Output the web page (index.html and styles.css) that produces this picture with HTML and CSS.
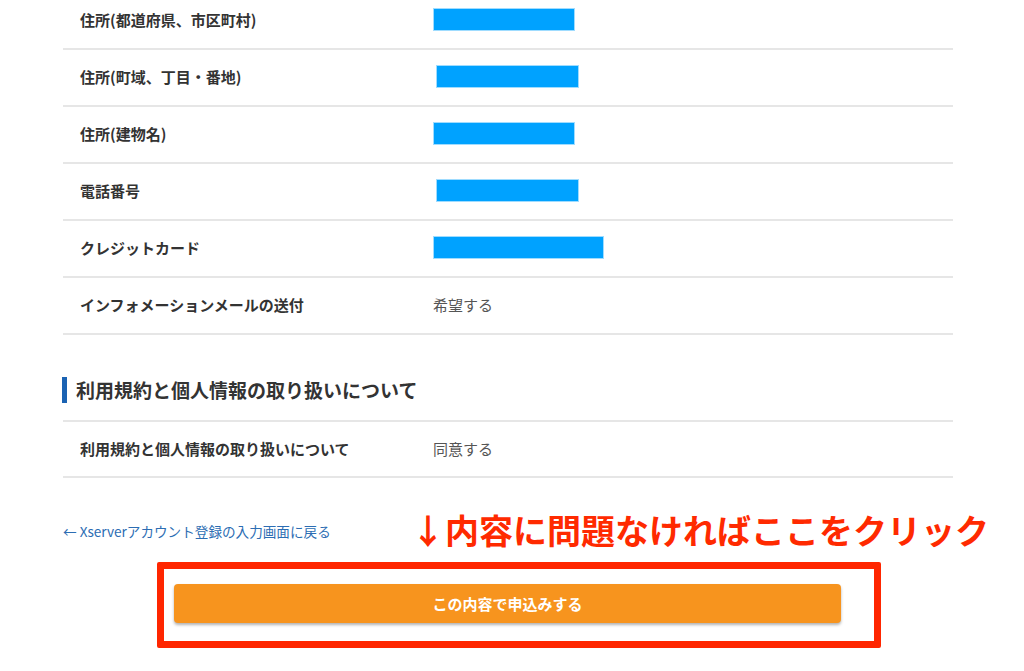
FILE: index.html
```html
<!DOCTYPE html>
<html lang="ja">
<head>
<meta charset="utf-8">
<title>確認画面</title>
<link rel="stylesheet" href="styles.css">
</head>
<body>
<main class="page">
  <div class="table table-first">
    <div class="row"><div class="label">住所(都道府県、市区町村)</div><div class="value"><span class="mask"></span></div></div>
    <div class="row"><div class="label">住所(町域、丁目・番地)</div><div class="value"><span class="mask mask-shift"></span></div></div>
    <div class="row"><div class="label">住所(建物名)</div><div class="value"><span class="mask"></span></div></div>
    <div class="row"><div class="label">電話番号</div><div class="value"><span class="mask mask-shift"></span></div></div>
    <div class="row"><div class="label">クレジットカード</div><div class="value"><span class="mask mask-wide"></span></div></div>
    <div class="row"><div class="label">インフォメーションメールの送付</div><div class="value">希望する</div></div>
  </div>

  <h2 class="section-title">利用規約と個人情報の取り扱いについて</h2>
  <div class="table table-bordered">
    <div class="row row-short"><div class="label">利用規約と個人情報の取り扱いについて</div><div class="value">同意する</div></div>
  </div>

  <div class="actions">
    <a class="back" href="#">← Xserverアカウント登録の入力画面に戻る</a>
    <p class="note">↓内容に問題なければここをクリック</p>
  </div>

  <div class="highlight">
    <button class="submit" type="button">この内容で申込みする</button>
  </div>
</main>
</body>
</html>
```

FILE: styles.css
```css
html, body {
  margin: 0;
  padding: 0;
  background: #ffffff;
}
body {
  font-family: "Noto Sans CJK JP", "Noto Sans", sans-serif;
  color: #333333;
  overflow: hidden;
}
.page {
  width: 890px;
  margin-left: 63px;
}
.table-first {
  margin-top: -7px;
}
.table-bordered {
  border-top: 2px solid #e6e6e6;
}
.row {
  display: grid;
  grid-template-columns: 370px 1fr;
  align-items: center;
  height: 55px;
  border-bottom: 2px solid #e6e6e6;
}
.row-short {
  height: 54px;
}
.label {
  padding-left: 17px;
  font-size: 15px;
  font-weight: 700;
  color: #333333;
  line-height: 1;
  margin-top: -2px;
}
.value {
  font-size: 15px;
  color: #555555;
  line-height: 1;
  margin-top: -2px;
}
.mask {
  display: block;
  width: 142px;
  height: 23px;
  background: #00a2ff;
  box-shadow: 0 0 0 1px #9fdcff inset;
}
.mask-shift {
  margin-left: 3px;
  width: 143px;
}
.mask-wide {
  width: 171px;
}
.section-title {
  margin: 42px 0 17px -1px;
  height: 26px;
  display: flex;
  align-items: center;
  border-left: 5px solid #1b63b3;
  padding-left: 9px;
  font-size: 19px;
  font-weight: 700;
  line-height: 26px;
  color: #333333;
}
.actions {
  display: flex;
  align-items: center;
  height: 40px;
  margin-top: 34px;
}
.back {
  flex: 0 0 348px;
  font-size: 13.6px;
  color: #2c6db3;
  text-decoration: none;
  line-height: 1;
  white-space: nowrap;
}
.note {
  flex: 0 0 auto;
  margin: -4px 0 0 0;
  font-size: 34px;
  font-weight: 700;
  color: #ff2a00;
  line-height: 1;
  white-space: nowrap;
}
.highlight {
  box-sizing: border-box;
  width: 724px;
  height: 86px;
  margin: 10px 0 0 94px;
  border: 7px solid #ff2600;
  border-radius: 2px;
  padding: 15px 33px 0 10px;
}
.submit {
  display: block;
  width: 100%;
  height: 39px;
  border: none;
  border-radius: 4px;
  background: #f7941e;
  color: #ffffff;
  font-family: "Noto Sans CJK JP", "Noto Sans", sans-serif;
  font-size: 15px;
  font-weight: 700;
  box-shadow: 0 2px 3px rgba(0, 0, 0, 0.3);
  cursor: pointer;
}
```
